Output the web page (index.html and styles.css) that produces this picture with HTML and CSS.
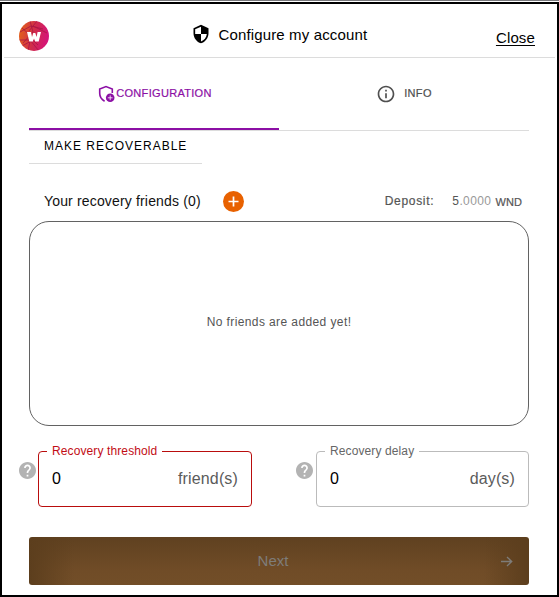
FILE: index.html
```
<!DOCTYPE html>
<html lang="en">
<head>
<meta charset="utf-8">
<title>Configure my account</title>
<link rel="stylesheet" href="styles.css">
</head>
<body>
<div class="window">
  <header class="header">
    <svg class="logo" viewBox="0 0 30 30">
      <defs>
        <linearGradient id="brand" x1="0" x2="1" y1=".4" y2=".6"><stop offset="0" stop-color="#e2601b"/><stop offset=".5" stop-color="#cf2b4c"/><stop offset="1" stop-color="#d6117d"/></linearGradient>
        <clipPath id="disc"><circle cx="15" cy="15" r="15"/></clipPath>
      </defs>
      <circle cx="15" cy="15" r="15" fill="url(#brand)"/>
      <g clip-path="url(#disc)" fill="none" stroke="#a91445" stroke-width=".8">
        <path d="M1 11L12 5L24 8M11 0L14 11L4 22M3 7L12 15L9 30M0 19H11L20 30M18 0L10 10M14 5L28 12M3 25L14 19L19 24"/>
      </g>
      <path d="M8 11h4l1 5 1.3-4h2l1.3 4 1-5h3.4L19.7 20.5h-3.5L15 17.5l-1.2 3h-3.5z" fill="#fff"/>
    </svg>
    <div class="title">
      <svg class="shield" viewBox="0 0 24 24"><path d="M12 1L3 5v6c0 5.55 3.84 10.74 9 12 5.16-1.26 9-6.45 9-12V5l-9-4zm0 10.99h7c-.53 4.12-3.28 7.79-7 8.94V12H5V6.3l7-3.11v8.8z"/></svg>
      <span>Configure my account</span>
    </div>
    <a class="close">Close</a>
  </header>
  <main class="content">
    <nav class="tabs">
      <div class="tab active">
        <svg class="tab-icon" viewBox="0 0 18 18">
          <path d="M6.6 16.2C3.4 14.4 1.7 11.4 1.7 8.3V4L8 1.5 14.3 4v4" fill="none" stroke="currentColor" stroke-width="1.6"/>
          <circle cx="12.2" cy="12.8" r="4.3" fill="currentColor"/>
          <path d="M12.2 10.4v4.8M9.8 12.8h4.8" stroke="#fff" stroke-width=".8"/>
        </svg>
        <span>CONFIGURATION</span>
      </div>
      <div class="tab info">
        <svg class="info-icon" viewBox="0 0 24 24"><path fill="currentColor" d="M11 7h2v2h-2zm0 4h2v6h-2zm1-9C6.48 2 2 6.48 2 12s4.48 10 10 10 10-4.48 10-10S17.52 2 12 2zm0 18c-4.41 0-8-3.59-8-8s3.59-8 8-8 8 3.59 8 8-3.59 8-8 8z"/></svg>
        <span>INFO</span>
      </div>
    </nav>
    <div class="section">MAKE RECOVERABLE</div>
    <div class="friends-bar">
      <span class="friends-title">Your recovery friends (0)</span>
      <svg class="add" viewBox="0 0 21 21"><circle cx="10.5" cy="10.5" r="10.5" fill="#e86100"/><path d="M10.5 5.5v10M5.5 10.5h10" stroke="#fff" stroke-width="1.7"/></svg>
      <span class="deposit">Deposit:</span>
      <span class="amount">5<span class="decimals">.0000</span></span>
      <span class="token">WND</span>
    </div>
    <div class="friends">No friends are added yet!</div>
    <div class="fields">
      <svg class="help" viewBox="2 2 20 20"><path d="M12 2C6.48 2 2 6.48 2 12s4.48 10 10 10 10-4.48 10-10S17.52 2 12 2zm1 17h-2v-2h2v2zm2.07-7.75l-.9.92C13.45 12.9 13 13.5 13 15h-2v-.5c0-1.1.45-2.1 1.17-2.83l1.24-1.26c.37-.36.59-.86.59-1.41 0-1.1-.9-2-2-2s-2 .9-2 2H8c0-2.21 1.79-4 4-4s4 1.79 4 4c0 .88-.36 1.68-.93 2.25z"/></svg>
      <fieldset class="field error">
        <legend>Recovery threshold</legend>
        <div class="value"><span>0</span><span class="unit">friend(s)</span></div>
      </fieldset>
      <svg class="help second" viewBox="2 2 20 20"><path d="M12 2C6.48 2 2 6.48 2 12s4.48 10 10 10 10-4.48 10-10S17.52 2 12 2zm1 17h-2v-2h2v2zm2.07-7.75l-.9.92C13.45 12.9 13 13.5 13 15h-2v-.5c0-1.1.45-2.1 1.17-2.83l1.24-1.26c.37-.36.59-.86.59-1.41 0-1.1-.9-2-2-2s-2 .9-2 2H8c0-2.21 1.79-4 4-4s4 1.79 4 4c0 .88-.36 1.68-.93 2.25z"/></svg>
      <fieldset class="field delay">
        <legend>Recovery delay</legend>
        <div class="value"><span>0</span><span class="unit">day(s)</span></div>
      </fieldset>
    </div>
    <div class="next">
      <span class="next-label">Next</span>
      <svg class="arrow" viewBox="0 0 12 12"><path d="M0 5.5h10.5M6 1l4.7 4.5L6 10" fill="none" stroke="currentColor" stroke-width="1.4"/></svg>
    </div>
  </main>
</div>
</body>
</html>
```
FILE: styles.css
```
* { box-sizing: border-box; }
body {
  margin: 0;
  background: #fff;
  font-family: "Liberation Sans", Arial, sans-serif;
  color: #000;
}
.window {
  width: 559px;
  height: 597px;
  border-top: 1px solid #77777b;
  padding-top: 1px;
  display: flex;
  flex-direction: column;
  background: #fff;
}
.window > * { border: 0 solid #000; border-left-width: 2px; border-right-width: 2px; }
.header {
  height: 56px;
  flex: none;
  border-top-width: 2px;
  display: flex;
  align-items: flex-start;
  font-size: 15px;
  line-height: 18px;
  letter-spacing: .14px;
  background: linear-gradient(#dcdcdc, #dcdcdc) 2px 100% / 551px 1px no-repeat;
}
.logo { width: 30px; height: 30px; margin: 17px 0 0 17px; }
.title { display: flex; margin: 20px 0 0 142px; }
.shield { width: 20px; height: 20px; margin-right: 7.5px; }
.title span { margin-top: 2px; }
.close { margin: 25px 0 0 auto; padding-right: 22px; text-underline-offset: 2px; text-decoration: underline; }
.content {
  flex: 1;
  border-bottom-width: 2px;
  padding: 0 28px 0 27px;
}
.tabs {
  height: 73px;
  display: flex;
  border-bottom: 1px solid #dcdcdc;
  font-size: 11px;
  letter-spacing: .31px;
  color: #4f4f4f;
}
.tab { width: 250px; height: 72px; display: flex; justify-content: center; align-items: center; }
.tab.active { color: #8c0fa5; border-bottom: 2px solid #8c0fa5; padding-left: 2px; }
.tab-icon { width: 18px; height: 18px; margin-top: 2px; }
.info-icon { width: 20px; height: 20px; margin-right: 8px; }
.info span { padding-bottom: 2px; }
.tab span { -webkit-text-stroke: .2px currentColor; }
.section {
  width: 173px;
  height: 33px;
  padding-left: 15px;
  border-bottom: 1px solid #dcdcdc;
  font-size: 12px;
  line-height: 30px;
  letter-spacing: 1px;
}
.friends-bar {
  height: 57px;
  display: flex;
  align-items: center;
  padding: 17px 7px 0 15px;
  font-size: 12px;
  color: #555;
}
.friends-title { font-size: 14px; letter-spacing: .16px; color: #111; }
.add { width: 21px; height: 21px; margin-left: 22px; }
.deposit { margin-left: auto; letter-spacing: .7px; padding-bottom: 1px; }
.amount { margin-left: 18px; letter-spacing: .4px; }
.decimals { color: #999; }
.token { margin-left: 4px; font-size: 11px; letter-spacing: .1px; padding-top: 1px; }
.deposit, .token { -webkit-text-stroke: .2px currentColor; }
.friends {
  height: 205px;
  padding-bottom: 4px;
  border: 1px solid #626262;
  border-radius: 20px;
  display: flex;
  align-items: center;
  justify-content: center;
  font-size: 12px;
  letter-spacing: .4px;
  color: #555;
}
.fields { display: flex; margin: 19px 0 0 -10px; }
.help { width: 17px; height: 17px; margin: 17px 2px 0 0; fill: #b3b3b3; }
.help.second { margin: 17px 3px 0 44px; }
.field {
  width: 214px;
  height: 62px;
  min-width: 0;
  margin: 0;
  padding: 0 13px 0 8px;
  border: 1px solid #bbb;
  border-radius: 4px;
}
.delay { width: 213px; }
.field.error { border-color: #b90d0d; }
.field legend {
  height: 13px;
  padding: 0 5px;
  font-size: 12px;
  line-height: 13px;
  letter-spacing: .11px;
  color: #666;
}
.error legend { color: #c20d15; }
.value {
  display: flex;
  justify-content: space-between;
  padding: 12px 0 0 5px;
  font-size: 16px;
  line-height: 18px;
  letter-spacing: .15px;
}
.unit { color: #5b5b5b; }
.next {
  position: relative;
  height: 48px;
  margin-top: 30px;
  border-radius: 3px;
  display: flex;
  align-items: center;
  justify-content: center;
  background:
    linear-gradient(90deg, #5c3e1d, #5c3e1d00 45px, #5c3e1d00 455px, #5c3e1d),
    linear-gradient(#5f4120, #704c27 70%, #724e28);
  color: #7e7c79;
  font-size: 15px;
}
.next-label { padding-right: 12px; padding-bottom: 2px; }
.arrow { position: absolute; right: 16px; top: 19px; width: 12px; height: 12px; }
```
